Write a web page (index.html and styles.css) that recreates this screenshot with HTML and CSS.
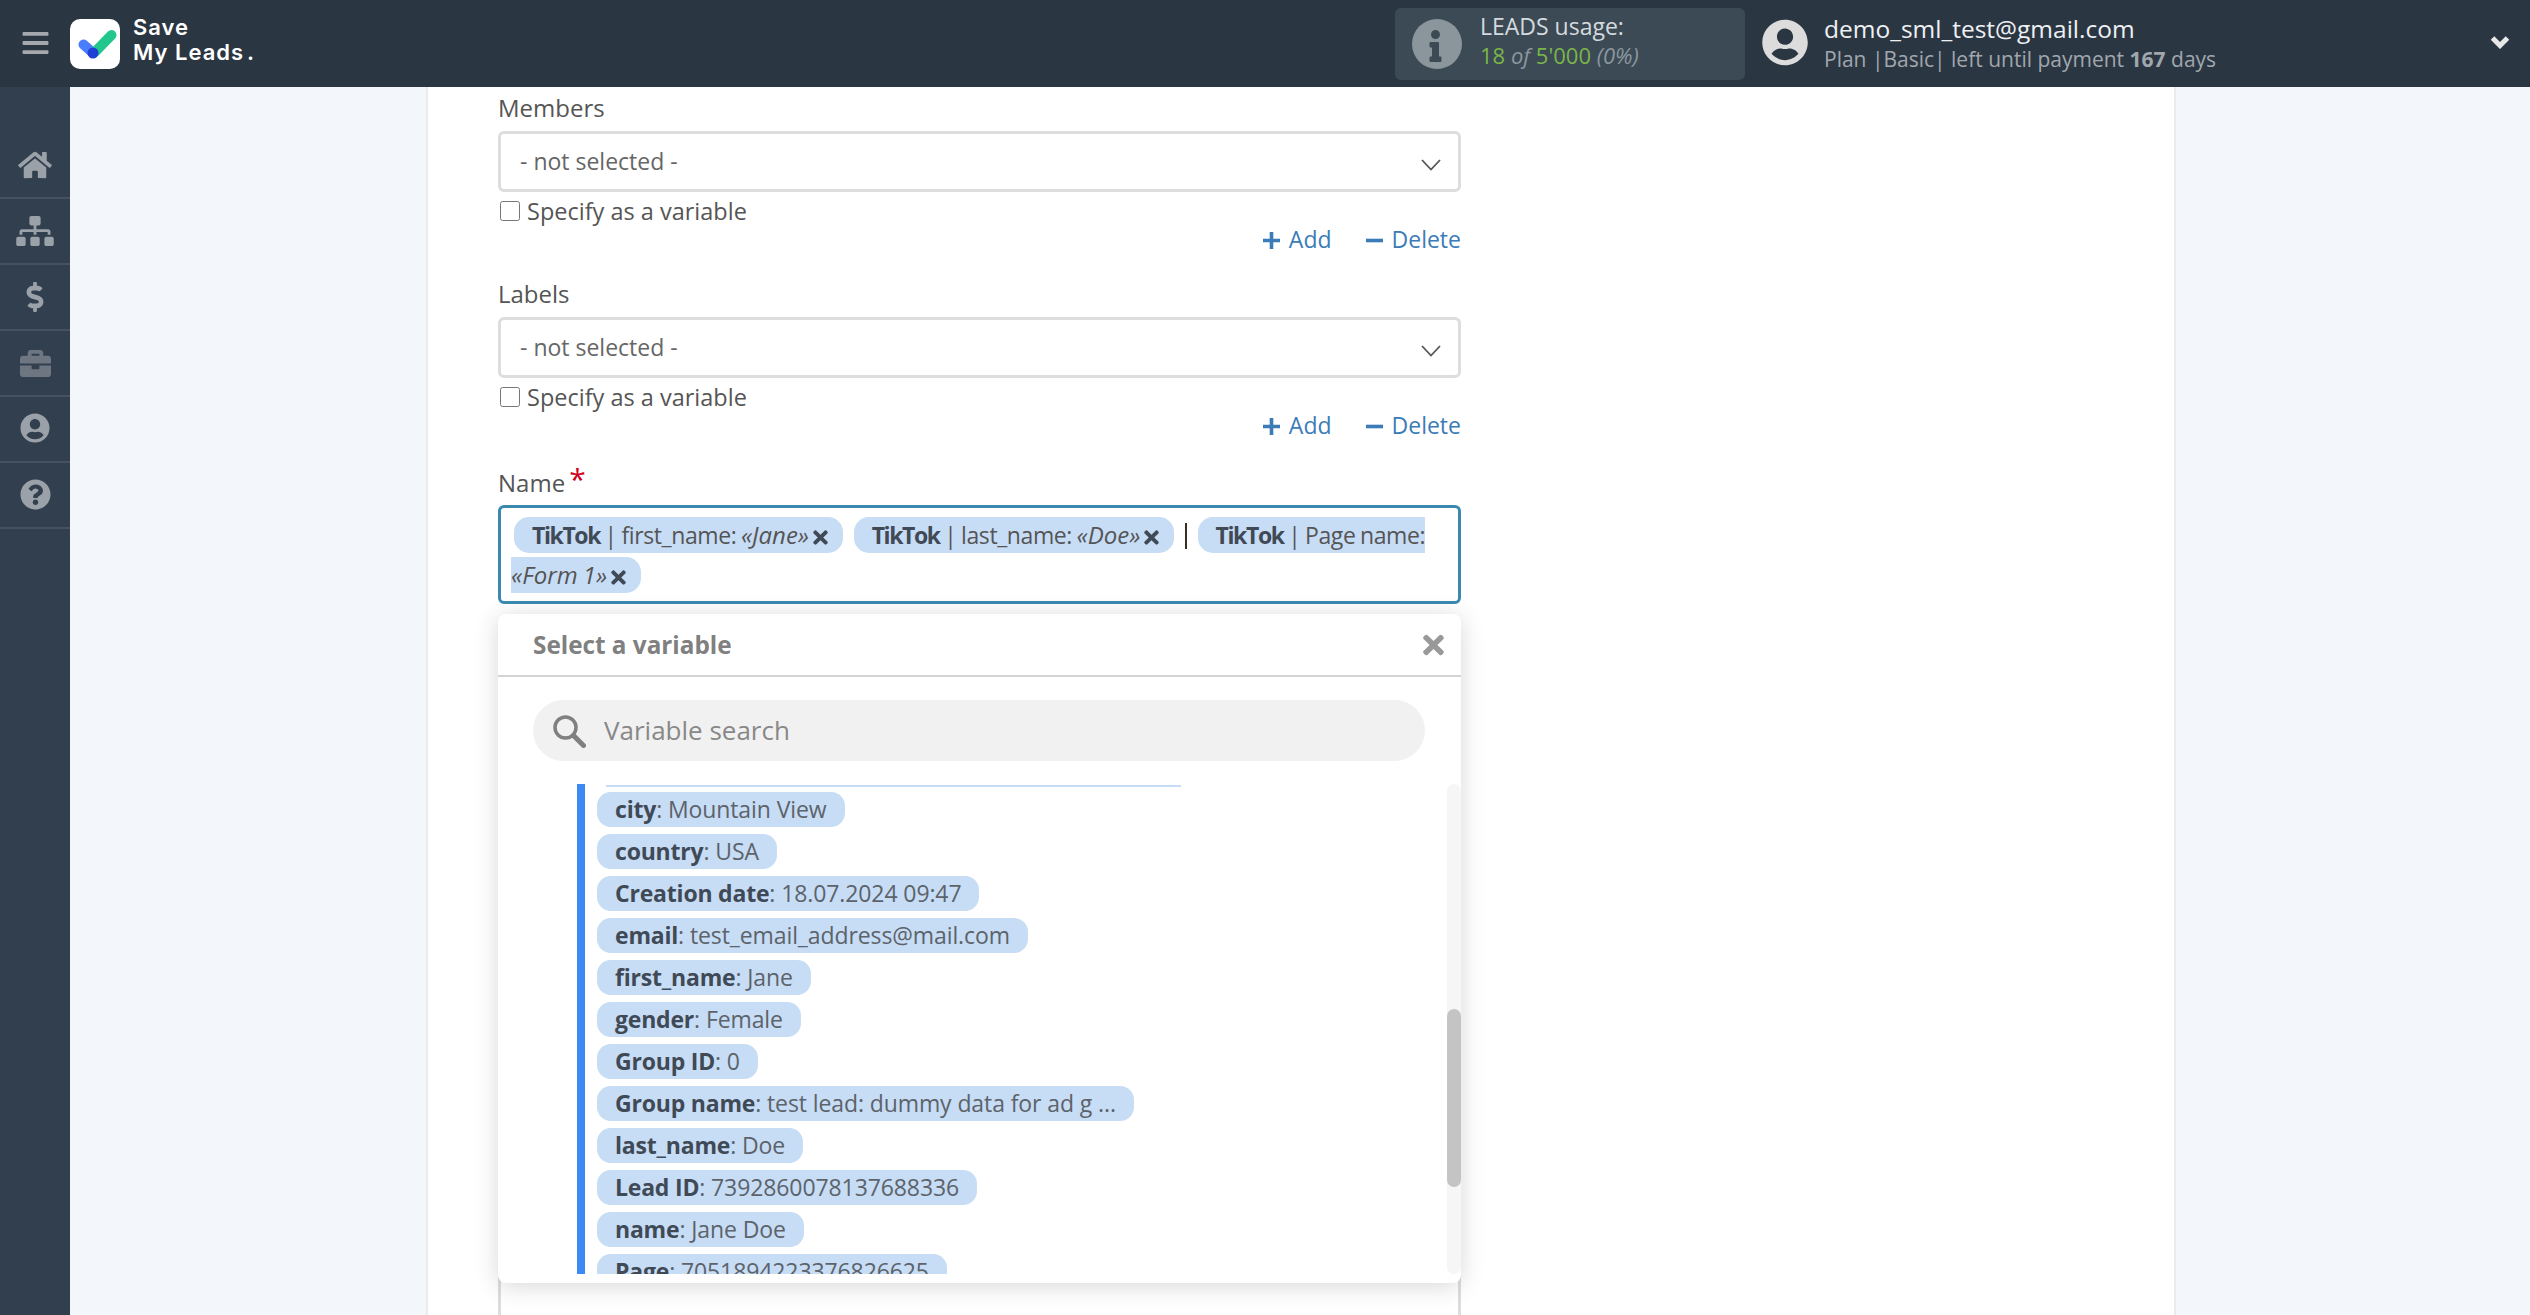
FILE: index.html
```html
<!DOCTYPE html>
<html lang="en">
<head>
<meta charset="utf-8">
<title>Save My Leads</title>
<link rel="stylesheet" href="styles.css">
</head>
<body>
<header class="topbar">
  <svg class="burger" viewBox="0 0 27 24"><rect y="0" width="27" height="4" rx="1"/><rect y="9.500" width="27" height="4" rx="1"/><rect y="19" width="27" height="4" rx="1"/></svg>
  <div class="logo-mark">
    <svg viewBox="0 0 50 50"><path d="M13.500 25.500L23 34" class="lg-blue"/><path d="M25 33L41.500 16" class="lg-green"/><circle cx="23" cy="34" r="5.500" fill="#1f3fd6"/></svg>
  </div>
  <div class="logo-text">Save<br>My Leads<span class="logo-dot">.</span></div>
  <div class="usage">
    <svg class="usage-icon" viewBox="0 0 50 50"><circle cx="25" cy="25" r="25" fill="#8b959c"/><g transform="translate(17.500 11) scale(.0625)"><path fill="#3b4a55" d="M20 424.229h20V279.771H20c-11.046 0-20-8.954-20-20V212c0-11.046 8.954-20 20-20h112c11.046 0 20 8.954 20 20v212.229h20c11.046 0 20 8.954 20 20V492c0 11.046-8.954 20-20 20H20c-11.046 0-20-8.954-20-20v-47.771c0-11.046 8.954-20 20-20zM96 0C56.235 0 24 32.235 24 72s32.235 72 72 72 72-32.235 72-72S135.764 0 96 0z"/></g></svg>
    <div class="usage-text">
      <div class="usage-title">LEADS usage:</div>
      <div class="usage-count"><span class="green">18</span> <em>of</em> <span class="green">5'000</span> <em>(0%)</em></div>
    </div>
  </div>
  <svg class="account-icon" viewBox="0 0 496 512"><path d="M248 8C111 8 0 119 0 256s111 248 248 248 248-111 248-248S385 8 248 8zm0 96c48.600 0 88 39.400 88 88s-39.400 88-88 88-88-39.400-88-88 39.400-88 88-88zm0 344c-58.700 0-111.300-26.600-146.500-68.200 18.800-35.400 55.600-59.800 98.500-59.800 2.400 0 4.800.4 7.100 1.100 13 4.200 26.600 6.900 40.900 6.900 14.300 0 28-2.700 40.900-6.900 2.300-.7 4.700-1.100 7.100-1.100 42.900 0 79.700 24.400 98.500 59.800C359.300 421.400 306.700 448 248 448z"/></svg>
  <div class="account">
    <div class="account-mail">demo_sml_test@gmail.com</div>
    <div class="account-plan">Plan |Basic| left until payment <b>167</b> days</div>
  </div>
  <svg class="account-chevron" viewBox="0 0 20 14"><path d="M2.500 3L10 10.500L17.500 3"/></svg>
</header>

<div class="shell">
  <nav class="sidebar">
    <a class="nav-item"><svg class="ic-home" viewBox="0 0 576 512"><path d="M280.370 148.260L96 300.110V464a16 16 0 0 0 16 16l112.060-.29a16 16 0 0 0 15.920-16V368a16 16 0 0 1 16-16h64a16 16 0 0 1 16 16v95.640a16 16 0 0 0 16 16.050L464 480a16 16 0 0 0 16-16V300L295.670 148.260a12.190 12.190 0 0 0-15.300 0zM571.600 251.470L488 182.560V44.050a12 12 0 0 0-12-12h-56a12 12 0 0 0-12 12v72.610L318.470 43a48 48 0 0 0-61 0L4.340 251.470a12 12 0 0 0-1.600 16.900l25.500 31A12 12 0 0 0 45.150 301l235.220-193.740a12.190 12.190 0 0 1 15.300 0L530.900 301a12 12 0 0 0 16.900-1.600l25.500-31a12 12 0 0 0-1.700-16.930z"/></svg></a>
    <a class="nav-item"><svg class="ic-map" viewBox="0 0 640 512"><path d="M128 352H32c-17.670 0-32 14.330-32 32v96c0 17.670 14.330 32 32 32h96c17.670 0 32-14.330 32-32v-96c0-17.670-14.330-32-32-32zm-24-80h192v48h48v-48h192v48h48v-57.590c0-21.170-17.230-38.410-38.410-38.410H344v-64h40c17.670 0 32-14.330 32-32V32c0-17.670-14.330-32-32-32H256c-17.670 0-32 14.330-32 32v96c0 17.670 14.330 32 32 32h40v64H94.410C73.230 224 56 241.230 56 262.410V320h48v-48zm264 80h-96c-17.670 0-32 14.330-32 32v96c0 17.670 14.330 32 32 32h96c17.670 0 32-14.330 32-32v-96c0-17.670-14.330-32-32-32zm240 0h-96c-17.670 0-32 14.330-32 32v96c0 17.670 14.330 32 32 32h96c17.670 0 32-14.330 32-32v-96c0-17.670-14.330-32-32-32z"/></svg></a>
    <a class="nav-item"><svg class="ic-dollar" viewBox="0 0 288 512"><path d="M209.200 233.400l-108-31.600C88.700 198.200 80 186.500 80 173.500c0-16.300 13.200-29.500 29.500-29.500h66.300c12.200 0 24.200 3.700 34.200 10.500 6.100 4.100 14.300 3.100 19.500-2l34.800-34c7.100-6.900 6.100-18.400-1.800-24.500C238 74.800 207.400 64.100 176 64V16c0-8.800-7.200-16-16-16h-32c-8.800 0-16 7.200-16 16v48h-2.500C45.800 64-5.400 118.700.5 183.600c4.200 46.100 39.400 83.600 83.800 96.600l102.500 30c12.500 3.700 21.200 15.300 21.200 28.300 0 16.300-13.200 29.500-29.500 29.500h-66.300C100 368 88 364.300 78 357.500c-6.100-4.100-14.300-3.100-19.500 2l-34.800 34c-7.100 6.900-6.100 18.400 1.800 24.500 24.500 19.200 55.100 29.900 86.500 30v48c0 8.800 7.200 16 16 16h32c8.800 0 16-7.200 16-16v-48.200c46.600-.9 90.300-28.600 105.700-72.700 21.500-61.600-14.600-124.800-72.500-141.700z"/></svg></a>
    <a class="nav-item dim"><svg class="ic-case" viewBox="0 0 512 512"><path d="M320 336c0 8.840-7.160 16-16 16h-96c-8.840 0-16-7.160-16-16v-48H0v144c0 25.600 22.400 48 48 48h416c25.600 0 48-22.400 48-48V288H320v48zm144-208h-80V80c0-25.600-22.400-48-48-48H176c-25.600 0-48 22.400-48 48v48H48c-25.600 0-48 22.400-48 48v80h512v-80c0-25.600-22.400-48-48-48zm-144 0H192V96h128v32z"/></svg></a>
    <a class="nav-item"><svg class="ic-user" viewBox="0 0 496 512"><path d="M248 8C111 8 0 119 0 256s111 248 248 248 248-111 248-248S385 8 248 8zm0 96c48.600 0 88 39.400 88 88s-39.400 88-88 88-88-39.400-88-88 39.400-88 88-88zm0 344c-58.700 0-111.300-26.600-146.500-68.200 18.800-35.400 55.600-59.800 98.500-59.800 2.400 0 4.800.4 7.100 1.100 13 4.200 26.600 6.900 40.900 6.900 14.300 0 28-2.700 40.900-6.900 2.300-.7 4.700-1.100 7.100-1.100 42.900 0 79.700 24.400 98.500 59.800C359.300 421.400 306.700 448 248 448z"/></svg></a>
    <a class="nav-item"><svg class="ic-help" viewBox="0 0 512 512"><path d="M504 256c0 136.997-111.043 248-248 248S8 392.997 8 256C8 119.083 119.043 8 256 8s248 111.083 248 248zM262.655 90c-54.497 0-89.255 22.957-116.549 63.758-3.536 5.286-2.353 12.415 2.715 16.258l34.699 26.310c5.205 3.947 12.621 3.008 16.665-2.122 17.864-22.658 30.113-35.797 57.303-35.797 20.429 0 45.698 13.148 45.698 32.958 0 14.976-12.363 22.667-32.534 33.976C247.128 238.528 216 254.941 216 296v4c0 6.627 5.373 12 12 12h56c6.627 0 12-5.373 12-12v-1.333c0-28.462 83.186-29.647 83.186-106.667 0-58.002-60.165-102-116.531-102zM256 338c-25.365 0-46 20.635-46 46 0 25.364 20.635 46 46 46s46-20.636 46-46c0-25.365-20.635-46-46-46z"/></svg></a>
  </nav>

  <main class="main">
    <section class="panel">
      <form class="form">
        <div class="field">
          <div class="label">Members</div>
          <div class="select"><span>- not selected -</span><svg class="select-arrow" viewBox="0 0 20 12"><path d="M1 1L10 10.500L19 1"/></svg></div>
          <label class="check"><input type="checkbox">Specify as a variable</label>
          <div class="actions">
            <a class="action"><svg viewBox="0 0 16 16"><path d="M6.300 0h3.400v6.300H16v3.400H9.700V16H6.300V9.700H0V6.300h6.300z"/></svg>Add</a>
            <a class="action"><svg viewBox="0 0 16 16"><path d="M0 6.300h16v3.400H0z"/></svg>Delete</a>
          </div>
        </div>
        <div class="field">
          <div class="label">Labels</div>
          <div class="select"><span>- not selected -</span><svg class="select-arrow" viewBox="0 0 20 12"><path d="M1 1L10 10.500L19 1"/></svg></div>
          <label class="check"><input type="checkbox">Specify as a variable</label>
          <div class="actions">
            <a class="action"><svg viewBox="0 0 16 16"><path d="M6.300 0h3.400v6.300H16v3.400H9.700V16H6.300V9.700H0V6.300h6.300z"/></svg>Add</a>
            <a class="action"><svg viewBox="0 0 16 16"><path d="M0 6.300h16v3.400H0z"/></svg>Delete</a>
          </div>
        </div>
        <div class="field field-name">
          <div class="label">Name <span class="req">*</span></div>
          <div class="tokens"><span class="token"><b>TikTok</b> | first_name: <em>«Jane»</em><svg class="x" viewBox="0 0 352 512"><path d="M242.720 256l100.070-100.070c12.280-12.280 12.280-32.190 0-44.480l-22.240-22.240c-12.280-12.280-32.190-12.280-44.480 0L176 189.280 75.930 89.210c-12.280-12.280-32.190-12.280-44.480 0L9.210 111.450c-12.280 12.280-12.280 32.190 0 44.480L109.280 256 9.210 356.070c-12.280 12.280-12.280 32.190 0 44.480l22.240 22.240c12.280 12.280 32.200 12.280 44.480 0L176 322.720l100.070 100.070c12.280 12.280 32.200 12.280 44.480 0l22.240-22.240c12.280-12.280 12.280-32.190 0-44.480L242.720 256z"/></svg></span> <span class="token"><b>TikTok</b> | last_name: <em>«Doe»</em><svg class="x" viewBox="0 0 352 512"><path d="M242.720 256l100.070-100.070c12.280-12.280 12.280-32.190 0-44.480l-22.240-22.240c-12.280-12.280-32.190-12.280-44.480 0L176 189.280 75.930 89.210c-12.280-12.280-32.190-12.280-44.480 0L9.210 111.450c-12.280 12.280-12.280 32.190 0 44.480L109.280 256 9.210 356.070c-12.280 12.280-12.280 32.190 0 44.480l22.240 22.240c12.280 12.280 32.200 12.280 44.480 0L176 322.720l100.070 100.070c12.280 12.280 32.200 12.280 44.480 0l22.240-22.240c12.280-12.280 12.280-32.190 0-44.480L242.720 256z"/></svg></span> <span class="caret"></span> <span class="token"><b>TikTok</b> | Page name: <em>«Form 1»</em><svg class="x" viewBox="0 0 352 512"><path d="M242.720 256l100.070-100.070c12.280-12.280 12.280-32.190 0-44.480l-22.240-22.240c-12.280-12.280-32.190-12.280-44.480 0L176 189.280 75.930 89.210c-12.280-12.280-32.190-12.280-44.480 0L9.210 111.450c-12.280 12.280-12.280 32.190 0 44.480L109.280 256 9.210 356.070c-12.280 12.280-12.280 32.190 0 44.480l22.240 22.240c12.280 12.280 32.200 12.280 44.480 0L176 322.720l100.070 100.070c12.280 12.280 32.200 12.280 44.480 0l22.240-22.240c12.280-12.280 12.280-32.190 0-44.480L242.720 256z"/></svg></span></div>
          <div class="next-box"></div>
          <div class="popup">
            <div class="popup-head">
              <span class="popup-title">Select a variable</span>
              <svg class="popup-close" viewBox="0 0 352 512"><path d="M242.720 256l100.070-100.070c12.280-12.280 12.280-32.190 0-44.480l-22.240-22.240c-12.280-12.280-32.190-12.280-44.480 0L176 189.280 75.930 89.210c-12.280-12.280-32.190-12.280-44.480 0L9.210 111.450c-12.280 12.280-12.280 32.190 0 44.480L109.280 256 9.210 356.070c-12.280 12.280-12.280 32.190 0 44.480l22.240 22.240c12.280 12.280 32.200 12.280 44.480 0L176 322.720l100.070 100.070c12.280 12.280 32.200 12.280 44.480 0l22.240-22.240c12.280-12.280 12.280-32.190 0-44.480L242.720 256z"/></svg>
            </div>
            <div class="search">
              <svg class="search-icon" viewBox="0 0 34 34"><circle cx="13.500" cy="13.500" r="10.500"/><path d="M21.500 21.500L31.500 31.500" class="search-handle"/></svg>
              <span>Variable search</span>
            </div>
            <div class="list-wrap">
              <div class="list">
                <div class="list-rule"></div>
                <span class="var"><b>city</b>: Mountain View</span>
                <span class="var"><b>country</b>: USA</span>
                <span class="var"><b>Creation date</b>: 18.07.2024 09:47</span>
                <span class="var"><b>email</b>: test_email_address@mail.com</span>
                <span class="var"><b>first_name</b>: Jane</span>
                <span class="var"><b>gender</b>: Female</span>
                <span class="var"><b>Group ID</b>: 0</span>
                <span class="var"><b>Group name</b>: test lead: dummy data for ad g ...</span>
                <span class="var"><b>last_name</b>: Doe</span>
                <span class="var"><b>Lead ID</b>: 7392860078137688336</span>
                <span class="var"><b>name</b>: Jane Doe</span>
                <span class="var"><b>Page</b>: 7051894223376826625</span>
              </div>
              <div class="scroll"><div class="thumb"></div></div>
            </div>
          </div>
        </div>
      </form>
    </section>
  </main>
</div>
</body>
</html>
```
FILE: styles.css
```css
* { box-sizing: border-box; }
html, body { margin: 0; height: 100%; overflow: hidden; }
body { font-family: "Open Sans", "Liberation Sans", sans-serif; font-size: 24px; color: #555; background: #f3f7fc; }

.topbar { height: 87px; background: #2b3643; display: flex; align-items: center; padding-left: 22px; }
.burger { width: 27px; height: 23px; fill: #a5a9ad; margin-right: 21px; }
.logo-mark { width: 50px; height: 50px; background: #fff; border-radius: 10px; margin-right: 13px; flex: none; }
.logo-mark svg { display: block; width: 50px; height: 50px; }
.lg-blue { stroke: #4a7dfb; stroke-width: 10; stroke-linecap: round; fill: none; }
.lg-green { stroke: #23c78d; stroke-width: 10; stroke-linecap: round; fill: none; }
.logo-text { font-family: Inter, "Liberation Sans", sans-serif; font-weight: 600; font-size: 22px; line-height: 25px; letter-spacing: 1px; color: #fff; width: 1262px; margin-top: -7px; }
.logo-dot { margin-left: 3px; }

.usage { width: 350px; height: 72px; background: #3b4a55; border-radius: 6px; display: flex; align-items: center; padding-left: 17px; flex: none; }
.usage-icon { width: 50px; height: 50px; margin-right: 18px; flex: none; }
.usage-text { font-size: 23px; line-height: 29px; margin-top: -5px; }
.usage-title { color: #d5dade; }
.usage-count { color: #8c979f; font-size: 22px; }
.green { color: #7ab648; }

.account-icon { width: 46px; height: 47px; fill: #dcdcdc; margin-left: 17px; flex: none; margin-top: -2px; }
.account { margin-left: 16px; flex: 1; }
.account-mail { color: #eef0f2; font-size: 24.500px; line-height: 33px; margin-top: -2px; }
.account-plan { color: #a0a7ad; font-size: 21px; line-height: 28px; }
.account-plan b { font-weight: 700; }
.account-chevron { width: 20px; height: 14px; fill: none; stroke: #e8e8e8; stroke-width: 5; margin: -3px 20px 0 0; }

.shell { display: grid; grid-template-columns: 70px 1fr; height: 1228px; }
.sidebar { background: #323f4e; padding-top: 46px; }
.nav-item { height: 66px; display: flex; align-items: center; justify-content: center; border-bottom: 2px solid #465260; fill: #9aa1a8; }
.nav-item.dim { fill: #6d7681; }
.ic-home { width: 34px; height: 30px; }
.ic-map { width: 38px; height: 30px; }
.ic-dollar { width: 18px; height: 30px; }
.ic-case { width: 31px; height: 31px; }
.ic-user { width: 30px; height: 30px; margin-top: -2px; }
.ic-help { width: 31px; height: 31px; margin-top: -2px; }

.main { overflow: hidden; background: #f3f7fc; }
.panel { margin-left: 356px; width: 1750px; height: 100%; background: #fff; border-left: 2px solid #e9ecef; border-right: 2px solid #e9ecef; padding: 4px 0 0 70px; overflow: hidden; }
.form { width: 963px; }

.field { margin-bottom: 25px; }
.label { line-height: 33px; margin-bottom: 7px; color: #555; }
.req { color: #d0021b; font-size: 30px; line-height: 20px; position: relative; top: -2px; margin-left: -2px; }
.select { height: 61px; border: 3px solid #ddd; border-radius: 6px; background: #fff; display: flex; align-items: center; justify-content: space-between; padding: 0 17px 0 19px; color: #666; font-size: 23px; }
.select span { margin-top: -2px; }
.select-arrow { width: 20px; height: 12px; fill: none; stroke: #555; stroke-width: 1.800; margin-top: 7px; }
.check { display: flex; align-items: center; height: 30px; margin-top: 4px; color: #555; font-size: 23.500px; }
.check input { width: 20px; height: 20px; margin: 0 7px 0 2px; }
.actions { display: flex; justify-content: flex-end; gap: 34px; height: 26px; line-height: 26px; font-size: 23px; }
.action { color: #3b7cb8; display: flex; align-items: center; }
.action svg { width: 17px; height: 17px; fill: #3b7cb8; margin-right: 9px; margin-top: 2px; }

.field-name { position: relative; margin-top: 28px; margin-bottom: 0; }
.field-name .label { margin-bottom: 6px; }
.tokens { height: 99px; border: 3px solid #3a8ab0; border-radius: 6px; padding: 7px 10px 5px; line-height: 40px; background: #fff; font-size: 23px; letter-spacing: -.4px; word-spacing: -1px; }
.token { background: #c7dcf5; border-radius: 15px; padding: 2px 15px 2px 18px; margin: 0 3px; color: #555; }
.token b { color: #3f4a56; letter-spacing: -1.400px; }
.token em { font-size: 24px; letter-spacing: 0; }
.x { width: 15px; height: 21px; fill: #3f4a56; vertical-align: -4px; margin-left: 4px; }
.caret { display: inline-block; width: 2px; height: 26px; background: #3a3020; vertical-align: -5px; margin: 0 3px; }
.next-box { height: 760px; border: 3px solid #ddd; border-radius: 6px; margin-top: 25px; }

.popup { position: absolute; left: 0; top: 148px; width: 963px; height: 669px; background: #fff; border-radius: 8px; box-shadow: 0 3px 24px rgba(0, 0, 0, .16); display: flex; flex-direction: column; }
.popup-head { height: 63px; border-bottom: 2px solid #d3d3d3; display: flex; align-items: center; justify-content: space-between; padding: 0 17px 0 35px; flex: none; }
.popup-title { font-weight: 700; color: #808080; font-size: 24.300px; }
.popup-close { width: 21px; height: 30px; fill: #999; }
.search { margin: 23px 36px 0 35px; height: 61px; border-radius: 31px; background: #f1f1f1; display: flex; align-items: center; padding-left: 19px; color: #888; font-size: 26px; flex: none; }
.search span { margin-top: -2px; }
.search-icon { width: 34px; height: 34px; margin-right: 18px; fill: none; stroke: #808080; stroke-width: 3.500; }
.search-handle { stroke-width: 5; stroke-linecap: round; }
.list-wrap { display: flex; margin-top: 23px; height: 490px; }
.list { flex: 1; margin-left: 79px; border-left: 8px solid #3c8af5; overflow: hidden; display: flex; flex-direction: column; align-items: flex-start; gap: 7px; padding: 1px 0 0 12px; font-size: 23px; letter-spacing: -.1px; }
.list-rule { width: 575px; height: 2px; background: #c7dcf5; margin: 0 0 -2px 9px; flex: none; }
.var { flex: none; height: 35px; line-height: 35px; background: #c7dcf5; border-radius: 14px; padding: 0 18px; color: #5c636a; white-space: nowrap; }
.var b { color: #3f4a56; letter-spacing: -.2px; }
.scroll { width: 14px; background: #f6f6f6; border-radius: 7px; flex: none; }
.thumb { height: 178px; margin-top: 225px; background: #c4c4c4; border-radius: 7px; }
```
